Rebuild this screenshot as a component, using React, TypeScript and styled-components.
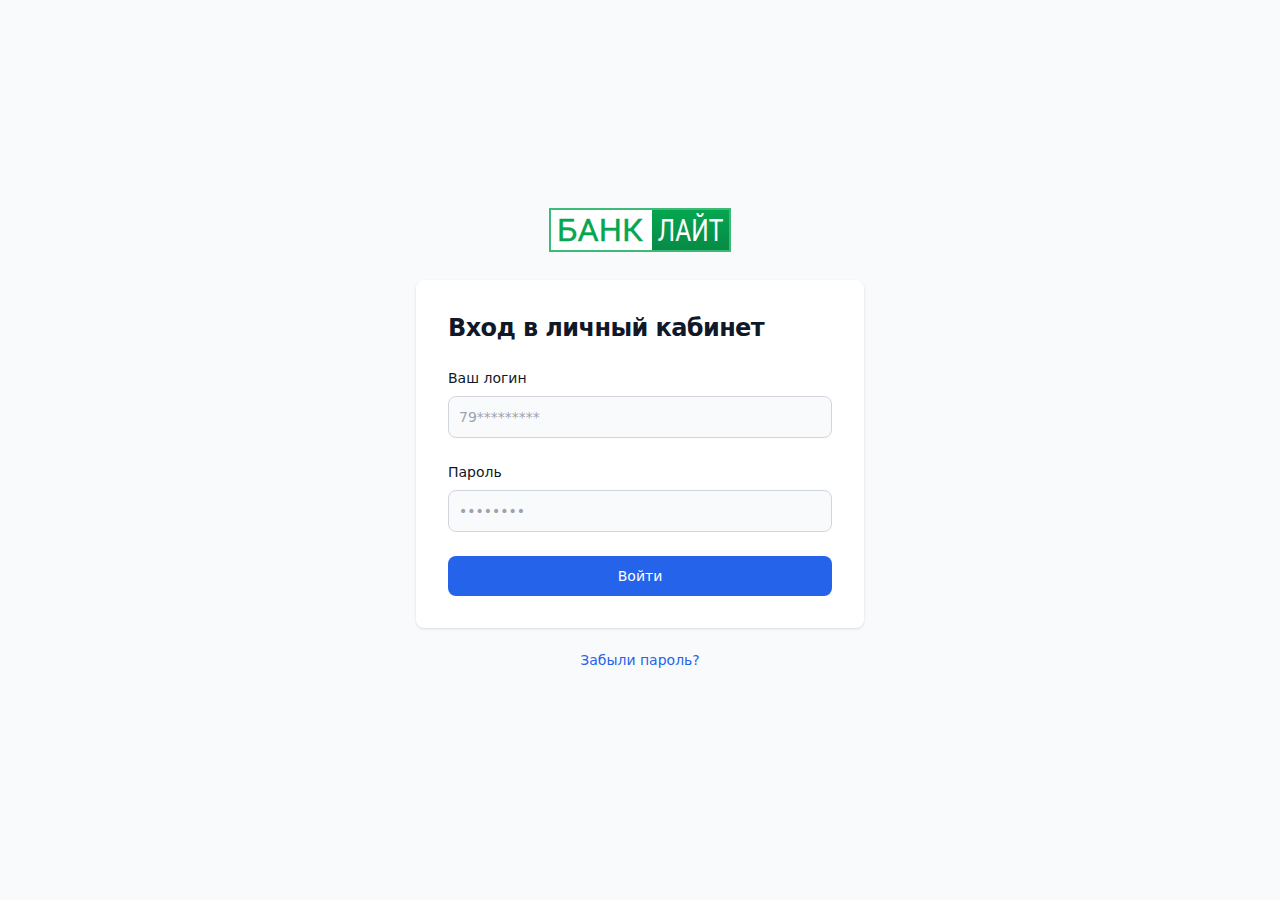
import * as React from 'react';
import styled, { createGlobalStyle } from 'styled-components';

const GlobalStyle = createGlobalStyle`
  html, body {
    margin: 0;
    padding: 0;
    background: #f9fafb;
    font-family: "DejaVu Sans", sans-serif;
  }
  * {
    box-sizing: border-box;
  }
`;

const Page = styled.div`
  min-height: 100vh;
  display: flex;
  flex-direction: column;
  align-items: center;
  padding-top: 208px;
`;

const Logo = styled.div`
  display: flex;
  width: 182px;
  height: 44px;
  margin-bottom: 28px;
  border: 2px solid #3dba78;
  font-family: "Roboto", sans-serif;
  font-size: 31px;
  overflow: hidden;
`;

const LogoPart = styled.div`
  display: flex;
  align-items: center;
  justify-content: center;
  white-space: nowrap;
  padding-top: 1px;
`;

const LogoLeft = styled(LogoPart)`
  width: 101px;
  padding-right: 3px;
  background: #fff;
  color: #06a650;
  span {
    transform: scaleX(1.05);
    -webkit-text-stroke: 0.3px #06a650;
  }
`;

const LogoRight = styled(LogoPart)`
  flex: 1;
  min-width: 0;
  padding-left: 1px;
  background: linear-gradient(180deg, #05a650 0%, #078a45 100%);
  color: #fff;
  span {
    transform: scaleX(0.79);
  }
`;

const Card = styled.form`
  width: 448px;
  padding: 32px;
  background: #fff;
  border-radius: 8px;
  box-shadow: 0 1px 3px rgba(0, 0, 0, 0.1), 0 1px 2px -1px rgba(0, 0, 0, 0.1);
`;

const Title = styled.h1`
  margin: 0 0 24px;
  font-size: 24px;
  line-height: 32px;
  font-weight: 700;
  letter-spacing: -0.6px;
  color: #111827;
`;

const Field = styled.div`
  margin-bottom: 24px;
`;

const Label = styled.label`
  display: block;
  margin-bottom: 8px;
  font-size: 14px;
  line-height: 20px;
  color: #111827;
`;

const Input = styled.input`
  display: block;
  width: 100%;
  height: 42px;
  padding: 10px;
  background: #f9fafb;
  border: 1px solid #d1d5db;
  border-radius: 8px;
  font-family: inherit;
  font-size: 14px;
  color: #111827;
  &::placeholder {
    color: #9ca3af;
    opacity: 1;
  }
`;

const Submit = styled.button`
  display: block;
  width: 100%;
  height: 40px;
  padding: 0 20px;
  background: #2563eb;
  border: 0;
  border-radius: 8px;
  font-family: inherit;
  font-size: 14px;
  line-height: 20px;
  color: #fff;
  cursor: pointer;
`;

const Forgot = styled.a`
  display: block;
  margin-top: 22px;
  font-size: 14px;
  line-height: 20px;
  color: #2563eb;
  text-decoration: none;
`;

export default function App() {
  return (
    <>
      <GlobalStyle />
      <Page>
        <Logo>
          <LogoLeft>
            <span>БАНК</span>
          </LogoLeft>
          <LogoRight>
            <span>ЛАЙТ</span>
          </LogoRight>
        </Logo>
        <Card onSubmit={(e) => e.preventDefault()}>
          <Title>Вход в личный кабинет</Title>
          <Field>
            <Label htmlFor="login">Ваш логин</Label>
            <Input id="login" type="text" placeholder="79*********" />
          </Field>
          <Field>
            <Label htmlFor="password">Пароль</Label>
            <Input id="password" type="password" placeholder="••••••••" />
          </Field>
          <Submit type="submit">Войти</Submit>
        </Card>
        <Forgot href="#">Забыли пароль?</Forgot>
      </Page>
    </>
  );
}
